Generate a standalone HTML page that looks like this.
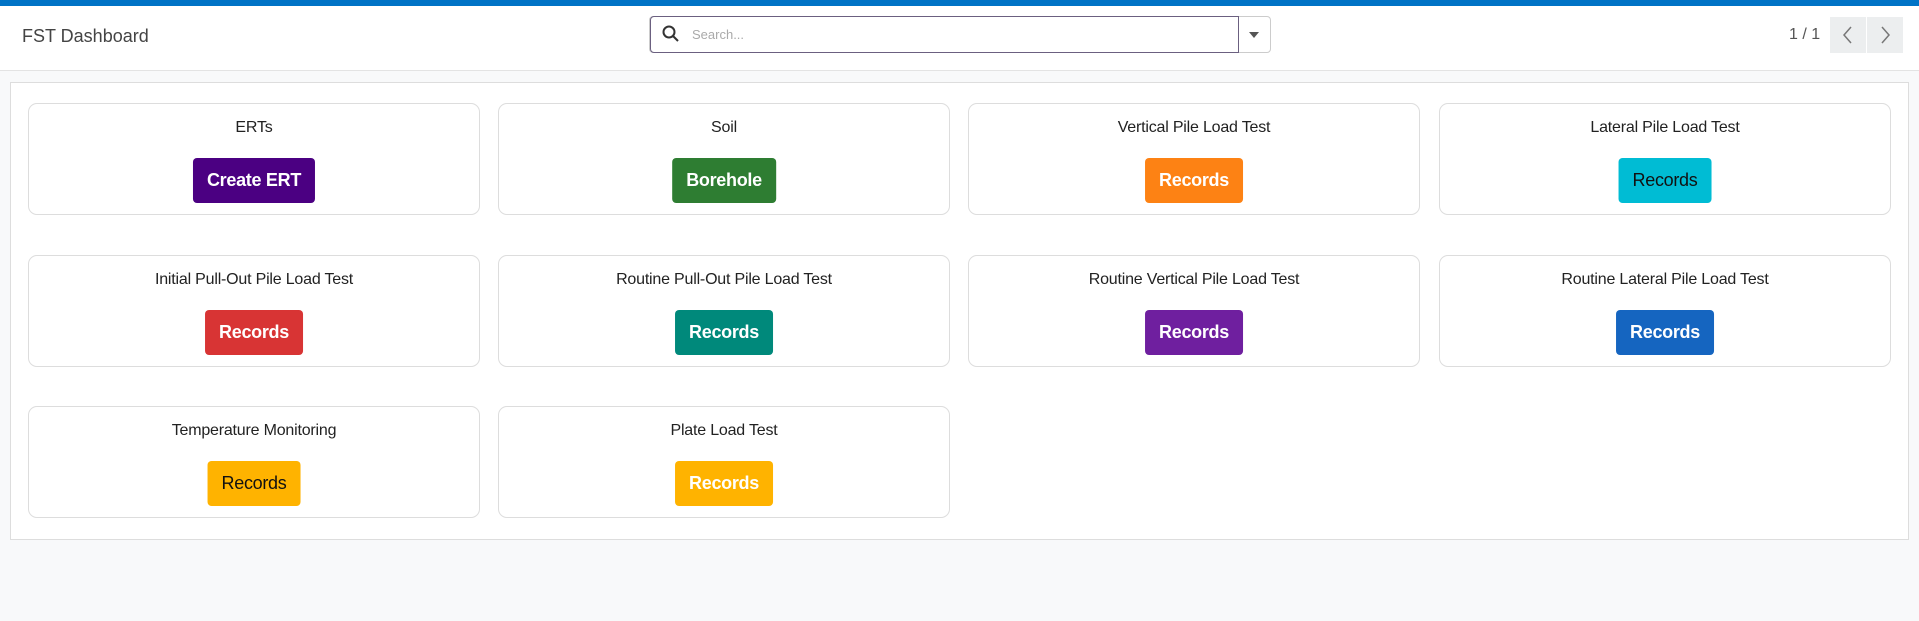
<!DOCTYPE html>
<html><head><meta charset="utf-8"><style>
*{box-sizing:border-box;margin:0;padding:0}
body{width:1919px;height:621px;background:#f8f9fa;font-family:"Liberation Sans",sans-serif;position:relative;overflow:hidden}
.bar{position:absolute;left:0;top:0;width:1919px;height:6px;background:#0073c6}
.hdr{position:absolute;left:0;top:6px;width:1919px;height:65px;background:#fff;border-bottom:1px solid #e3e3e3}
.title{position:absolute;left:22px;top:20px;font-size:18px;color:#444}
.search{position:absolute;left:649px;top:10px;width:622px;height:37px;border:1px solid #ccc;border-radius:4px;background:#fff}
.search .in{position:absolute;left:0;top:-1px;width:589px;height:37px;border:1px solid #6b6080;border-radius:4px 0 0 4px}
.search .ph{position:absolute;left:42px;top:10px;font-size:13px;color:#aaa}
.search .dd{position:absolute;left:599px;top:15px;width:0;height:0;border-left:5px solid transparent;border-right:5px solid transparent;border-top:6px solid #555}
.pg{position:absolute;left:1789px;top:20px;font-size:16px;color:#555}
.pb{position:absolute;top:11px;width:36px;height:36px;background:#eceeef}
.panel{position:absolute;left:10px;top:82px;width:1899px;height:458px;background:#fff;border:1px solid #ddd}
.card{position:absolute;width:452px;height:112px;border:1px solid #ddd;border-radius:9px;background:#fff;text-align:center}
.card .t{position:absolute;left:0;right:0;top:15px;font-size:16px;color:#222;letter-spacing:-0.2px}
.card .b{position:absolute;left:50%;transform:translateX(-50%);top:54px;height:45px;line-height:45px;padding:0 14px;border-radius:4px;font-size:18px;font-weight:bold;color:#fff;letter-spacing:-0.3px}
</style></head><body>
<div class="bar"></div>
<div class="hdr">
<div class="title">FST Dashboard</div>
<div class="search"><div class="in"></div>
<svg style="position:absolute;left:12px;top:8px" width="18" height="18" viewBox="0 0 18 18"><circle cx="7" cy="7" r="5.5" fill="none" stroke="#333" stroke-width="2"/><path d="M11 11l5 5" stroke="#333" stroke-width="2"/></svg>
<div class="ph">Search...</div><div class="dd"></div></div>
<div class="pg">1 / 1</div>
<div class="pb" style="left:1830px"><svg width="36" height="36" viewBox="0 0 36 36"><path d="M21 10l-7 8 7 8" fill="none" stroke="#777" stroke-width="1.5"/></svg></div>
<div class="pb" style="left:1867px"><svg width="36" height="36" viewBox="0 0 36 36"><path d="M15 10l7 8-7 8" fill="none" stroke="#777" stroke-width="1.5"/></svg></div>
</div>
<div class="panel"></div>
<div class="card" style="left:28px;top:103px"><div class="t">ERTs</div><div class="b" style="background:#4b0082">Create ERT</div></div>
<div class="card" style="left:498px;top:103px"><div class="t">Soil</div><div class="b" style="background:#2e7d32">Borehole</div></div>
<div class="card" style="left:968px;top:103px"><div class="t">Vertical Pile Load Test</div><div class="b" style="background:#fd8214">Records</div></div>
<div class="card" style="left:1439px;top:103px"><div class="t">Lateral Pile Load Test</div><div class="b" style="background:#00bcd4;color:#111;font-weight:normal">Records</div></div>
<div class="card" style="left:28px;top:255px"><div class="t">Initial Pull-Out Pile Load Test</div><div class="b" style="background:#d83434">Records</div></div>
<div class="card" style="left:498px;top:255px"><div class="t">Routine Pull-Out Pile Load Test</div><div class="b" style="background:#00897b">Records</div></div>
<div class="card" style="left:968px;top:255px"><div class="t">Routine Vertical Pile Load Test</div><div class="b" style="background:#6f1f9f">Records</div></div>
<div class="card" style="left:1439px;top:255px"><div class="t">Routine Lateral Pile Load Test</div><div class="b" style="background:#1565c0">Records</div></div>
<div class="card" style="left:28px;top:406px"><div class="t">Temperature Monitoring</div><div class="b" style="background:#ffb300;color:#111;font-weight:normal">Records</div></div>
<div class="card" style="left:498px;top:406px"><div class="t">Plate Load Test</div><div class="b" style="background:#ffb300">Records</div></div>
</body></html>
